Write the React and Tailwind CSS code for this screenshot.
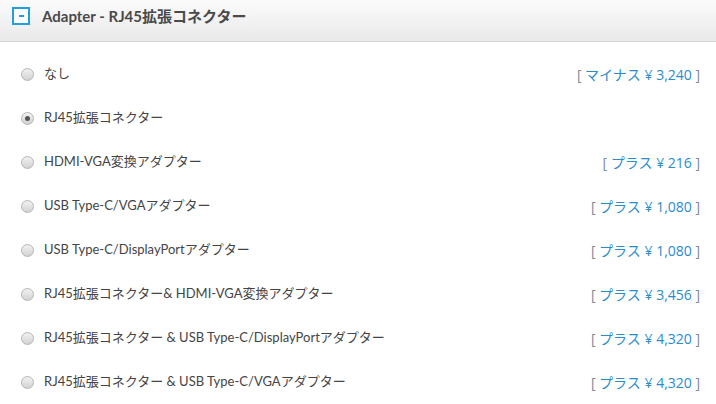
import React from "react"

const options = [
  { label: "なし", kind: "マイナス", amount: "¥ 3,240" },
  { label: "RJ45拡張コネクター", checked: true },
  { label: "HDMI-VGA変換アダプター", kind: "プラス", amount: "¥ 216" },
  { label: "USB Type-C/VGAアダプター", kind: "プラス", amount: "¥ 1,080" },
  { label: "USB Type-C/DisplayPortアダプター", kind: "プラス", amount: "¥ 1,080" },
  { label: "RJ45拡張コネクター& HDMI-VGA変換アダプター", kind: "プラス", amount: "¥ 3,456" },
  { label: "RJ45拡張コネクター & USB Type-C/DisplayPortアダプター", kind: "プラス", amount: "¥ 4,320" },
  { label: "RJ45拡張コネクター & USB Type-C/VGAアダプター", kind: "プラス", amount: "¥ 4,320" },
]

function Radio({ checked }) {
  return (
    <span className="flex h-[13px] w-[13px] shrink-0 items-center justify-center rounded-full border border-[#b5b5b5] bg-gradient-to-b from-[#f2f2f2] to-[#d2d2d2]">
      {checked && <span className="h-[5px] w-[5px] rounded-full bg-[#555]" />}
    </span>
  )
}

export default function App() {
  return (
    <div className="h-[404px] w-[716px] overflow-hidden bg-white font-['Lato','Noto_Sans_CJK_JP',sans-serif] text-[#444]">
      {/* header */}
      <div className="flex h-[42px] items-start border-b border-[#d4d4d4] bg-gradient-to-b from-[#fbfbfb] to-[#e9e9e9] pl-[12px] pt-[7px]">
        <span className="flex h-[18px] w-[18px] items-center justify-center border-2 border-[#1fa0e3] bg-white">
          <span className="h-[1.5px] w-[5px] bg-[#1fa0e3]" />
        </span>
        <h2 className="ml-[12px] text-[15px] font-bold leading-[18px] text-[#4a4a4a]">Adapter - RJ45拡張コネクター</h2>
      </div>

      {/* options */}
      <ul className="pt-[10px]">
        {options.map((o, i) => (
          <li key={i} className="flex h-[44px] items-center pl-[21px] pr-[16px] text-[13px]">
            <Radio checked={o.checked} />
            <span className="ml-[10px] flex-1">{o.label}</span>
            {o.kind && (
              <span className="font-['Open_Sans','Noto_Sans_CJK_JP',sans-serif] text-[14px]">
                <span className="text-[#7d8c9a]">[ </span>
                <span className="text-[#2a8ccb]">{o.kind} {o.amount}</span>
                <span className="text-[#7d8c9a]"> ]</span>
              </span>
            )}
          </li>
        ))}
      </ul>
    </div>
  )
}
